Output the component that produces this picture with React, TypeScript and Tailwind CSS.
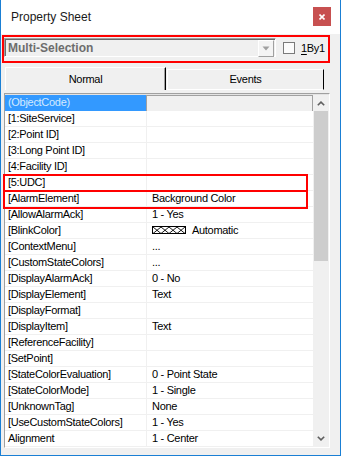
import React from 'react';

const rows: [string, string][] = [
  ['[1:SiteService]', ''],
  ['[2:Point ID]', ''],
  ['[3:Long Point ID]', ''],
  ['[4:Facility ID]', ''],
  ['[5:UDC]', ''],
  ['[AlarmElement]', 'Background Color'],
  ['[AllowAlarmAck]', '1 - Yes'],
  ['[BlinkColor]', 'swatch'],
  ['[ContextMenu]', '...'],
  ['[CustomStateColors]', '...'],
  ['[DisplayAlarmAck]', '0 - No'],
  ['[DisplayElement]', 'Text'],
  ['[DisplayFormat]', ''],
  ['[DisplayItem]', 'Text'],
  ['[ReferenceFacility]', ''],
  ['[SetPoint]', ''],
  ['[StateColorEvaluation]', '0 - Point State'],
  ['[StateColorMode]', '1 - Single'],
  ['[UnknownTag]', 'None'],
  ['[UseCustomStateColors]', '1 - Yes'],
  ['Alignment', '1 - Center'],
];

function Swatch() {
  // hatched colour box shown for BlinkColor
  const cells = [0, 1, 2, 3];
  return (
    <svg width="35" height="9" viewBox="0 0 35 9" className="shrink-0">
      <rect x="0.5" y="0.5" width="33" height="7" fill="white" stroke="black" />
      {cells.map((i) => (
        <g key={i} stroke="black" strokeWidth="0.9">
          <line x1={1 + i * 8} y1="1" x2={9 + i * 8} y2="7.5" />
          <line x1={1 + i * 8} y1="7.5" x2={9 + i * 8} y2="1" />
        </g>
      ))}
    </svg>
  );
}

function Row({ name, value }: { name: string; value: string }) {
  return (
    <div className="flex h-[16px] border-b border-[#f0f0f0]">
      <div className="w-[142px] shrink-0 border-r border-[#f0f0f0] pl-[3px] leading-[15px] whitespace-nowrap overflow-hidden">
        {name}
      </div>
      <div className="w-[166px] shrink-0 pl-[5px] leading-[15px] whitespace-nowrap flex items-center">
        {value === 'swatch' ? (
          <>
            <Swatch />
            <span className="ml-[5px]">Automatic</span>
          </>
        ) : (
          value
        )}
      </div>
    </div>
  );
}

export default function App() {
  return (
    <div className="relative w-[341px] h-[456px] overflow-hidden bg-[#f0f0f0] border-x border-b border-[#1a7fd4] font-['Liberation_Sans',Arial,sans-serif] text-[11px] tracking-[-0.3px] text-black">
      {/* Title bar */}
      <div className="h-[34px] bg-white flex items-center justify-between pl-[10px] pr-[9px]">
        <span className="text-[12px] tracking-normal text-[#1a1a1a] -mt-[1px]">Property Sheet</span>
        <div className="w-[18px] h-[19px] bg-[#c75050] flex items-center justify-center -mt-[1px]">
          <svg width="6" height="6" viewBox="0 0 6 6">
            <path d="M0.5 0.5 L5.5 5.5 M5.5 0.5 L0.5 5.5" stroke="white" strokeWidth="1.6" />
          </svg>
        </div>
      </div>

      {/* Selection bar (highlighted) */}
      <div className="mt-[1px] ml-[1px] w-[328px] h-[28px] border-2 border-[#ff0000] flex items-start pt-[1px]">
        <div className="w-[272px] h-[19px] flex items-center justify-between border border-t-[#a0a0a0] border-l-[#a0a0a0] border-b-white border-r-white shadow-[inset_1px_1px_0_#696969] bg-[#f0f0f0]">
          <span className="pl-[3px] text-[12px] font-bold tracking-normal text-[#6d6d6d]">Multi-Selection</span>
          <div className="w-[16px] h-[17px] mr-[1px] mt-[1px] flex items-center justify-center border border-t-white border-l-white border-b-[#a0a0a0] border-r-[#a0a0a0] bg-[#f4f4f4]">
            <svg width="8" height="5" viewBox="0 0 8 5">
              <path d="M0.5 0.5 L7.5 0.5 L4 4.5 Z" fill="#a0a0a0" />
            </svg>
          </div>
        </div>
        <div className="ml-[7px] mt-[4px] w-[12px] h-[12px] border border-[#7a7a7a] bg-[#fbfbfb]" />
        <span className="ml-[6px] mt-[3px] leading-[14px]">
          <span className="underline underline-offset-2">1</span>By1
        </span>
      </div>

      {/* Tabs */}
      <div className="flex mt-[4px] ml-[4px] h-[23px]">
        <div className="w-[161px] h-[23px] border-t border-l border-white border-r border-r-black shadow-[inset_-1px_0_0_#a0a0a0] flex items-center justify-center pt-[1px]">
          Normal
        </div>
        <div className="w-[157px] h-[21px] mt-[2px] ml-[1px] border-t border-l border-b border-white border-r border-r-black flex items-center justify-center">
          Events
        </div>
      </div>

      {/* Property grid */}
      <div className="mt-[3px] ml-[3px] w-[326px] border border-t-[#a0a0a0] border-l-[#a0a0a0] border-r-white border-b-white bg-white">
        <div className="border-t border-[#e3e3e3] flex">
          <div className="w-[308px] shrink-0">
            <div className="flex h-[16px]">
              <div className="w-[141px] shrink-0 bg-[#3399ff] text-[#d4eaff] pl-[3px] leading-[15px] whitespace-nowrap">
                (ObjectCode)
              </div>
              <div className="w-[167px] shrink-0 border-l border-t border-r border-[#a0a0a0] bg-[#f0f0f0]" />
            </div>
            {rows.map(([n, v]) => (
              <Row key={n} name={n} value={v} />
            ))}
          </div>

          {/* Scrollbar */}
          <div className="w-[16px] shrink-0 bg-[#f0f0f0] flex flex-col">
            <div className="h-[16px] flex items-center justify-center">
              <svg width="8" height="5" viewBox="0 0 8 5">
                <path d="M0.8 4.3 L4 1.1 L7.2 4.3" fill="none" stroke="#606060" strokeWidth="1.6" />
              </svg>
            </div>
            <div className="h-[150px] mx-[1px] bg-[#cdcdcd]" />
            <div className="flex-1" />
            <div className="h-[16px] flex items-center justify-center pb-[1px]">
              <svg width="8" height="5" viewBox="0 0 8 5">
                <path d="M0.8 0.7 L4 3.9 L7.2 0.7" fill="none" stroke="#606060" strokeWidth="1.6" />
              </svg>
            </div>
          </div>
        </div>
      </div>

      {/* Annotation boxes over the grid rows */}
      <div className="absolute left-[2px] top-[174px] w-[305px] h-[18px] border-2 border-[#ff0000] pointer-events-none" />
      <div className="absolute left-[2px] top-[190px] w-[305px] h-[19px] border-2 border-[#ff0000] pointer-events-none" />
    </div>
  );
}
